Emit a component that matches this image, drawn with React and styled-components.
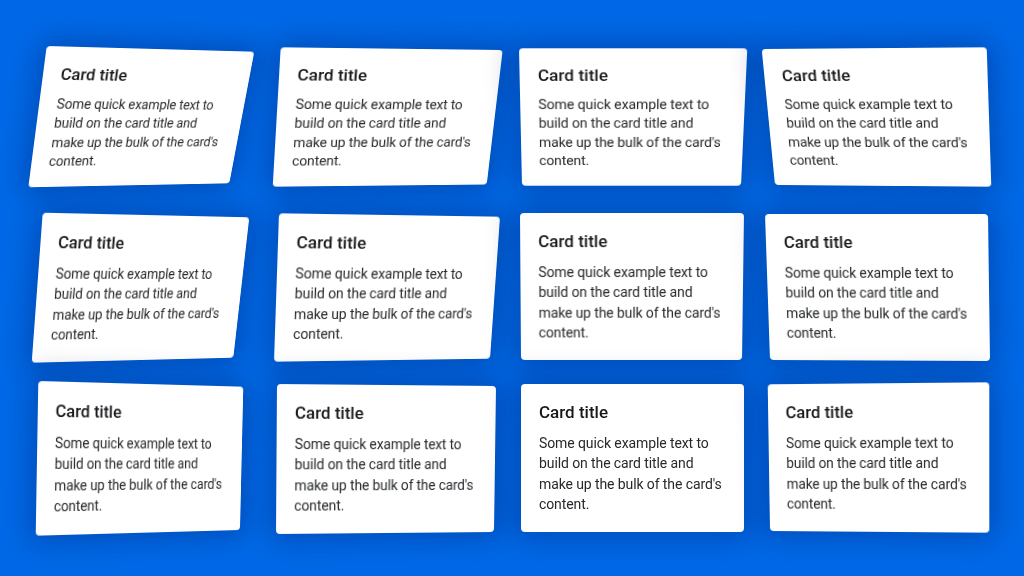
import React from "react";
import styled, { createGlobalStyle } from "styled-components";

const CARD_W = 223;
const CARD_H = 148;
const PAD_LEFT = 33;
const PAD_TOP = 48;
const COL_GAP = 21;
const ROW_GAP = 20;

const GlobalStyle = createGlobalStyle`
  html, body {
    margin: 0;
    padding: 0;
    background: #0068e6;
    overflow: hidden;
  }
  body {
    font-family: Roboto, "Liberation Sans", Arial, sans-serif;
  }
`;

const Stage = styled.main`
  width: 1024px;
  height: 576px;
  box-sizing: border-box;
  background: #0068e6;
  padding: ${PAD_TOP}px 0 0 ${PAD_LEFT}px;
  display: grid;
  grid-template-columns: repeat(4, ${CARD_W}px);
  grid-template-rows: repeat(3, ${CARD_H}px);
  column-gap: ${COL_GAP}px;
  row-gap: ${ROW_GAP}px;
  align-content: start;
`;

const Card = styled.article`
  box-sizing: border-box;
  width: ${CARD_W}px;
  height: ${CARD_H}px;
  background: #ffffff;
  border-radius: 4px;
  padding: 18px;
  transform-origin: 0 0;
  box-shadow: 0 0 28px 6px rgba(0, 22, 90, 0.33);
  -webkit-font-smoothing: antialiased;
`;

const Title = styled.h5`
  margin: 0 0 10.5px 0;
  font-size: 17px;
  line-height: 20.4px;
  font-weight: 500;
  color: #16181b;
`;

const Text = styled.p`
  margin: 0;
  font-size: 14px;
  line-height: 20.3px;
  font-weight: 400;
  letter-spacing: -0.1px;
  color: #26292c;
`;

// target corners (TL, TR, BR, BL) in page coordinates
const QUADS = [
  [[46.7, 46], [254.3, 51.7], [229.3, 183.3], [28.3, 187.3]],
  [[280.7, 47.3], [502.7, 50], [486.7, 184.5], [272.7, 186.7]],
  [[519, 48.3], [747.3, 48.3], [741, 185.7], [522, 185.7]],
  [[761.7, 49], [986.7, 47.3], [991.3, 186.7], [775, 185]],
  [[42.7, 212.7], [249.3, 217.3], [233.3, 357.7], [31.7, 362.7]],
  [[279, 213.3], [500, 216.7], [490, 358.7], [274, 361.7]],
  [[520, 213], [744, 213], [742, 360], [521, 360]],
  [[765, 214], [988, 214], [990, 361], [770, 360]],
  [[38.3, 381], [243.3, 386.7], [240, 530], [35.7, 535.7]],
  [[277, 384], [496, 386], [494, 532], [276, 534]],
  [[521, 384], [744, 384], [744, 532], [521, 532]],
  [[767.7, 384.3], [989.3, 382.3], [989.3, 532.7], [770, 531]],
];

function quadMatrix(quad, ox, oy) {
  const [x0, y0] = [quad[0][0] - ox, quad[0][1] - oy];
  const [x1, y1] = [quad[1][0] - ox, quad[1][1] - oy];
  const [x2, y2] = [quad[2][0] - ox, quad[2][1] - oy];
  const [x3, y3] = [quad[3][0] - ox, quad[3][1] - oy];
  const dx1 = x1 - x2, dx2 = x3 - x2, dx3 = x0 - x1 + x2 - x3;
  const dy1 = y1 - y2, dy2 = y3 - y2, dy3 = y0 - y1 + y2 - y3;
  let g = 0, h = 0;
  const den = dx1 * dy2 - dx2 * dy1;
  if (Math.abs(dx3) > 1e-9 || Math.abs(dy3) > 1e-9) {
    g = (dx3 * dy2 - dx2 * dy3) / den;
    h = (dx1 * dy3 - dx3 * dy1) / den;
  }
  const a = x1 - x0 + g * x1;
  const b = x3 - x0 + h * x3;
  const c = x0;
  const d = y1 - y0 + g * y1;
  const e = y3 - y0 + h * y3;
  const f = y0;
  const W = CARD_W, H = CARD_H;
  const m = [
    a / W, d / W, 0, g / W,
    b / H, e / H, 0, h / H,
    0, 0, 1, 0,
    c, f, 0, 1,
  ];
  return `matrix3d(${m.map((v) => +v.toFixed(8)).join(",")})`;
}

const cards = QUADS.map((quad, i) => {
  const col = i % 4;
  const row = Math.floor(i / 4);
  const ox = PAD_LEFT + col * (CARD_W + COL_GAP);
  const oy = PAD_TOP + row * (CARD_H + ROW_GAP);
  return { id: i, transform: quadMatrix(quad, ox, oy) };
});

export default function App() {
  return (
    <>
      <GlobalStyle />
      <Stage>
        {cards.map((c) => (
          <Card key={c.id} style={{ transform: c.transform }}>
            <Title>Card title</Title>
            <Text>
              Some quick example text to build on the card title and make up
              the bulk of the card's content.
            </Text>
          </Card>
        ))}
      </Stage>
    </>
  );
}
